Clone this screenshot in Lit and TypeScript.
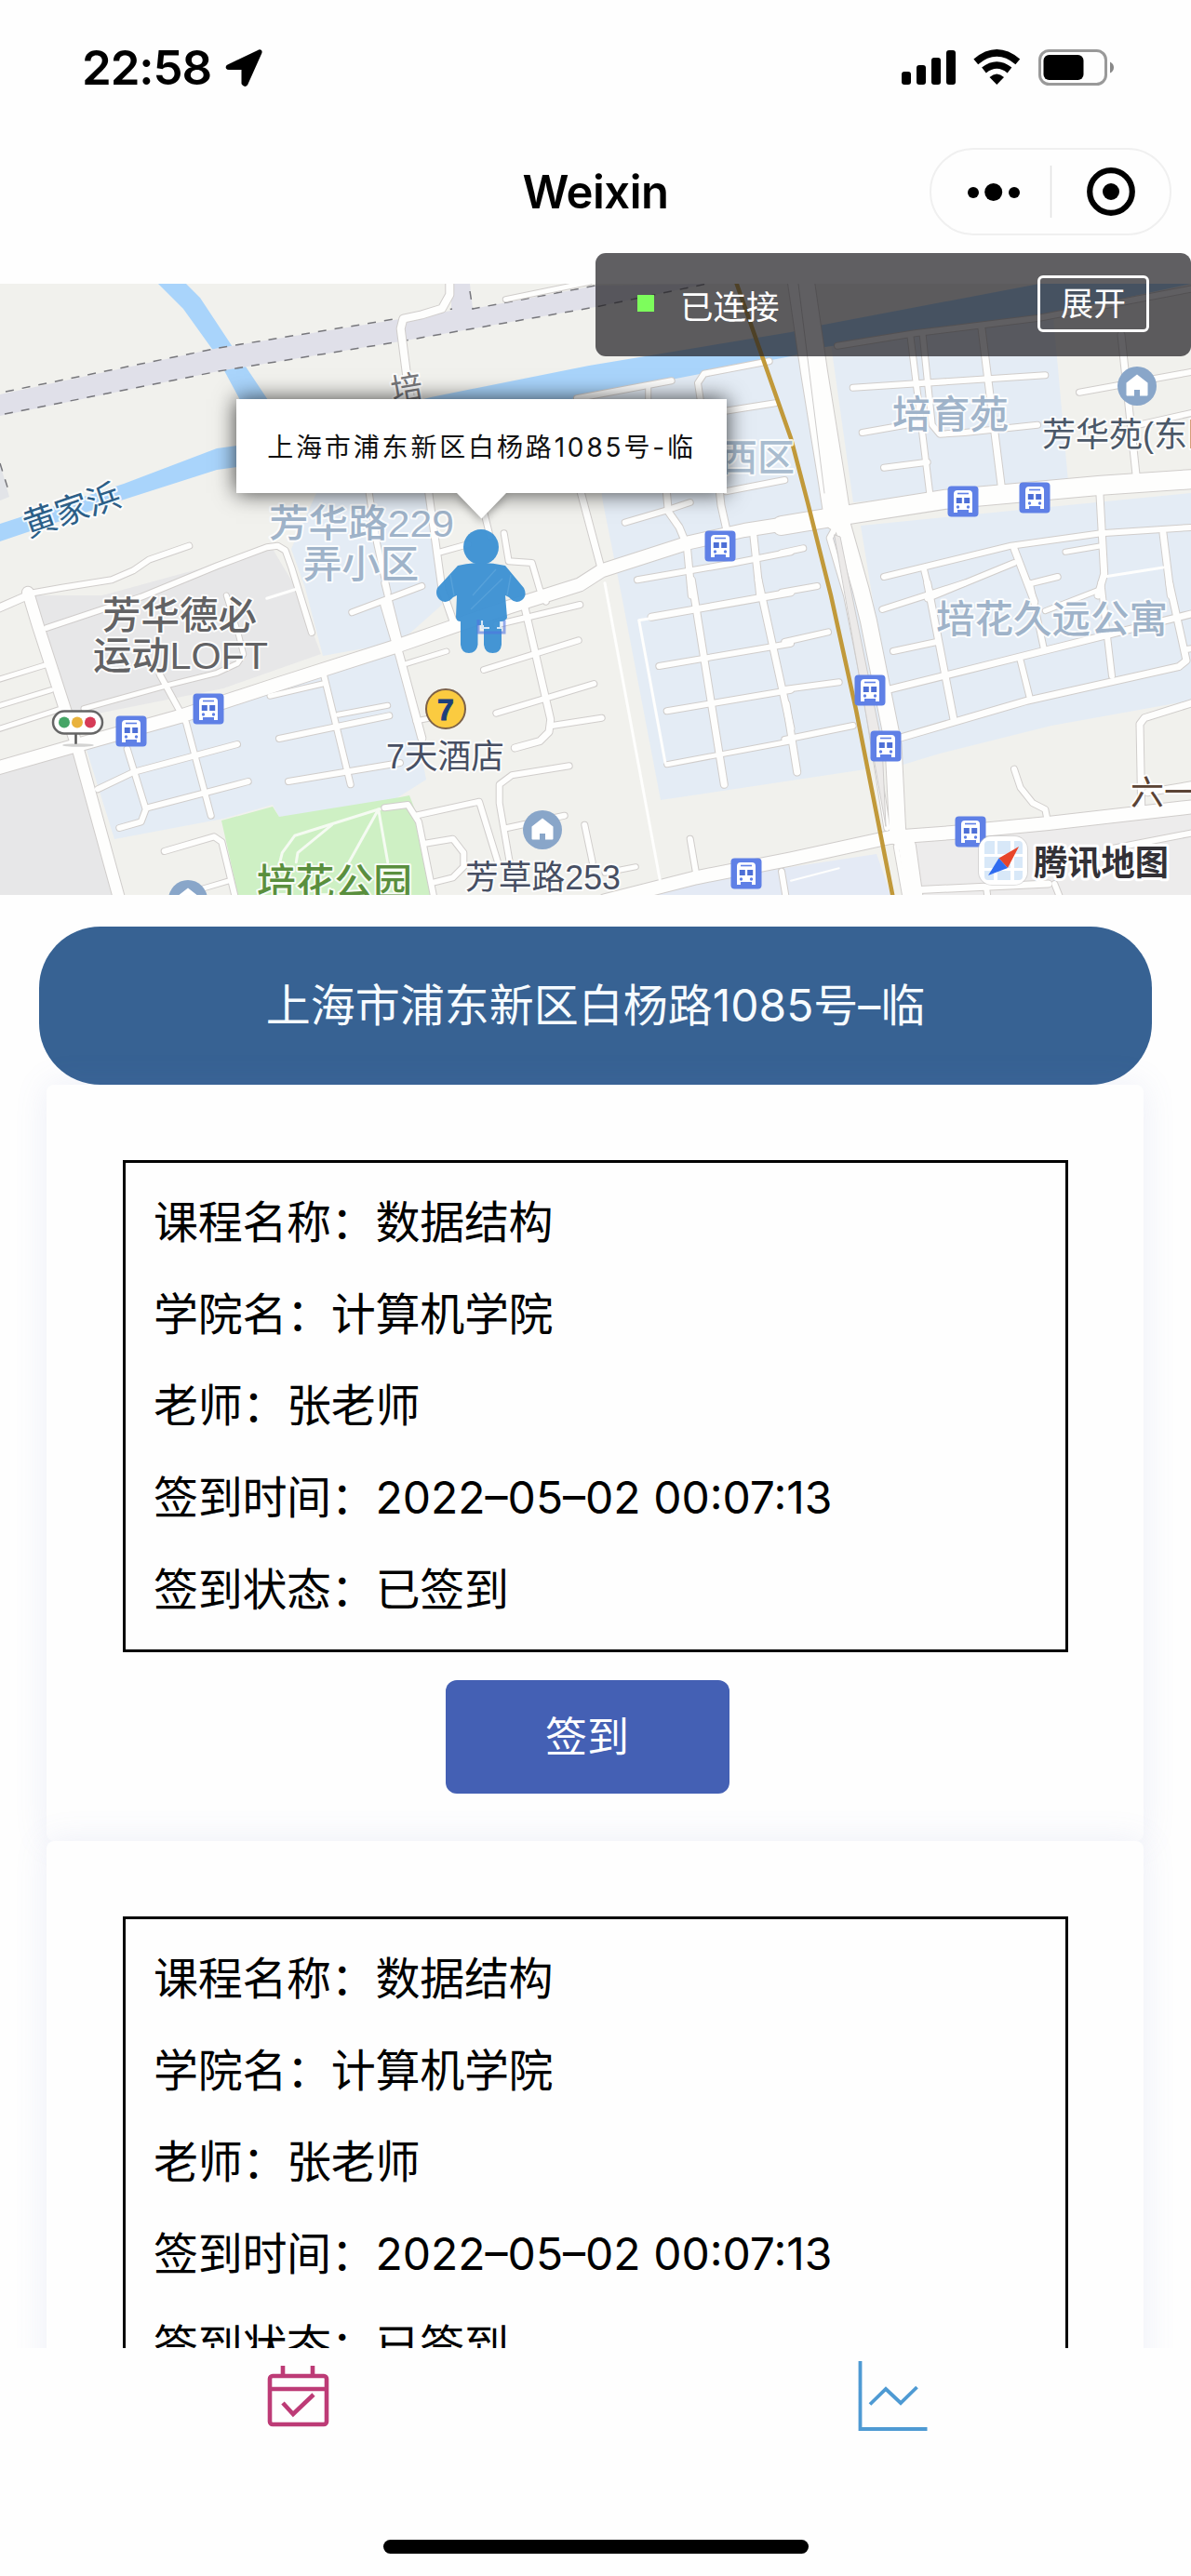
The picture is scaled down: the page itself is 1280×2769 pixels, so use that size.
import { LitElement, html, svg, css } from "lit";
import { customElement, property } from "lit/decorators.js";

type Origin = [number, number];
type Road = [number, string];

// The map is described in tiles drawn at three times the display scale.
const A: Origin = [0, 300];
const B: Origin = [0, 630];
const C: Origin = [420, 300];
const D: Origin = [420, 630];
const E: Origin = [850, 300];
const F: Origin = [850, 630];

const tile = (o: Origin, roads: Road[]) =>
  roads.map(([w, pts]) => ({
    w,
    pts: pts
      .split(" ")
      .map((p) => {
        const [x, y] = p.split(",").map(Number);
        return `${(o[0] + x / 3).toFixed(1)},${(o[1] + y / 3).toFixed(1)}`;
      })
      .join(" "),
  }));

const ROADS = [
  ...tile(A, [
    [6, "610,860 480,905 430,940 360,970 200,995 90,1015"],
    [6, "150,1125 330,1065 455,1025 700,925 860,865 895,860 920,875 940,930 1005,1140"],
    [3, "860,1030 960,998"],
    [6, "1190,690 1215,850 1250,1010"],
  ]),
  ...tile(B, [
    [12, "90,20 120,120 230,460 250,520 385,1010"],
    [8, "-20,78 90,30"],
    [14, "-20,590 240,515 580,420 900,315 1290,190 1485,122 1640,68 1870,-5 1940,-50 2220,-140 2400,-180 2560,-205"],
    [5, "-10,303 145,255"],
    [5, "-10,388 165,335"],
    [5, "-10,463 200,395"],
    [5, "270,395 540,320 700,280 765,250 785,220 770,160 730,30"],
    [6, "515,285 600,440 680,740"],
    [6, "315,655 430,600 765,510"],
    [6, "475,715 800,630"],
    [6, "410,525 470,720 455,760 385,780"],
    [6, "530,855 690,808 715,825 760,1010"],
    [5, "655,975 740,950"],
    [6, "1045,290 1130,640"],
    [6, "900,492 1255,418"],
    [5, "1090,415 1250,385"],
    [6, "930,630 1290,570"],
    [5, "870,355 1040,315"],
    [6, "1240,-10 1290,190"],
    [6, "1135,85 1360,0"],
  ]),
  ...tile(C, [
    [8, "190,-10 190,50 165,95 100,115 40,128 32,160 50,300 80,500"],
    [5, "370,65 640,10"],
    [7, "110,600 165,1000 200,1100"],
    [6, "160,880 250,855"],
    [6, "300,750 320,830"],
    [6, "365,820 380,910 455,915 480,1000 500,1040"],
    [7, "600,640 680,940"],
    [6, "755,785 890,745 965,720"],
    [7, "885,640 895,750 930,800 955,860 970,1020"],
    [7, "1055,640 1065,730 1085,820"],
    [6, "1080,685 1270,648"],
    [6, "795,970 1110,915 1290,880"],
    [7, "1170,830 1190,1020"],
    [6, "600,385 905,328"],
    [5, "830,345 830,395"],
    [6, "1000,400 990,335 1010,305 1220,265"],
    [6, "1060,428 1240,400"],
  ]),
  ...tile(D, [
    [8, "-20,60 30,230 100,490"],
    [5, "50,250 180,210"],
    [7, "430,60 515,430 510,470 480,500 400,522"],
    [6, "340,125 610,60"],
    [6, "300,270 605,175"],
    [6, "340,410 655,315"],
    [6, "520,450 680,425"],
    [5, "80,435 130,425"],
    [6, "575,580 390,610 350,640 350,700 385,900"],
    [6, "375,780 560,740"],
    [6, "80,740 285,695 345,890"],
    [6, "110,830 200,815 235,860 235,905 200,940 140,955"],
    [6, "-20,715 55,705 90,760 140,1010"],
    [6, "625,770 650,890"],
    [5, "690,925 790,905"],
    [3, "690,-10 870,960"],
    [7, "840,100 1290,20"],
    [3, "850,102 800,110 885,570"],
    [7, "970,-20 1075,640"],
    [7, "1185,-20 1290,460"],
    [6, "865,258 1290,185"],
    [6, "890,403 1290,335"],
    [5, "890,575 1290,500"],
    [6, "965,815 985,930"],
    [14, "690,1015 985,940 1290,880 1610,810 1810,795 2120,765 2600,710"],
    [6, "1260,920 1275,1010"],
  ]),
  ...tile(E, [
    [28, "30,-10 75,300 130,640 150,770"],
    [20, "-30,795 150,765 500,710 1000,665 1300,645"],
    [17, "160,770 225,1000 250,1100 330,1500 345,1800"],
    [6, "150,790 125,835 180,1020 240,1320 310,1770"],
    [6, "200,350 820,310"],
    [6, "385,180 450,710"],
    [6, "425,180 455,470 480,500 560,495 795,470"],
    [6, "230,495 430,460"],
    [6, "300,608 440,590"],
    [7, "615,160 680,680"],
    [7, "1065,180 1115,650"],
    [6, "930,365 1300,298"],
    [6, "1100,475 1300,430"],
    [6, "150,215 400,175 800,125 1300,30"],
    [7, "995,680 1010,950 990,1020"],
    [6, "300,960 710,860 1000,820 1300,800"],
    [6, "430,940 450,1020"],
    [6, "440,1030 720,915"],
    [7, "720,870 785,1040"],
    [6, "780,980 860,960"],
    [5, "885,880 1000,860"],
    [7, "1200,820 1225,1020"],
    [3, "1010,960 1200,930"],
    [6, "-30,883 40,868"],
    [6, "-30,1010 85,990"],
  ]),
  ...tile(F, [
    [6, "-20,180 120,148"],
    [6, "-20,333 155,310"],
    [6, "-20,495 200,450"],
    [7, "-15,380 20,600"],
    [6, "295,75 560,-10"],
    [7, "440,-10 525,430"],
    [6, "330,210 470,180"],
    [7, "310,335 810,210 1290,90"],
    [7, "350,490 760,370 1250,260 1275,240 1260,170 1220,-10"],
    [6, "740,240 770,360"],
    [6, "770,-10 815,200"],
    [6, "1000,-10 1035,290"],
    [5, "820,80 1000,10"],
    [6, "1270,205 1300,200"],
    [7, "1300,375 1140,425 1125,445 1130,710"],
    [6, "720,590 740,650 780,700 820,720 825,745"],
    [6, "1300,795 1040,845"],
    [7, "400,980 830,960"],
    [6, "630,970 635,1010"],
    [6, "850,960 870,1010"],
    [7, "1150,665 1300,640"],
    [18, "345,800 375,840 400,1020"],
    [5, "340,840 370,1010"],
    [2, "0,950 155,910"],
  ]),
];

const PARK_PATHS = tile(B, [
  [3, "900,900 910,860 950,805 1220,720 1300,705"],
  [3, "955,890 960,860 1070,770"],
  [3, "1120,900 1220,720 1250,890"],
]);

const AREAS: [string, string][] = [
  ["#e7e7e8", "35,640 110,640 293,590 318,632 345,703 240,740 80,772"],
  ["#e7e7e8", "0,828 82,808 125,963 0,963"],
  ["#edecec", "968,905 1280,872 1280,963 985,963"],
  ["#e2e4e8", "0,498 10,534 0,538"],
  ["#e4ecf5", "313,590 340,530 458,530 475,650 430,690 347,705 328,632"],
  ["#e4ecf5", "93,806 430,690 458,838 420,862 300,878 293,865 240,880 123,902"],
  ["#e4ecf5", "648,540 633,425 850,383 875,380 908,545 955,780 930,827 710,860 668,640"],
  ["#e4ecf5", "893,370 1132,340 1148,518 917,540"],
  ["#e4ecf5", "925,565 1280,530 1280,753 1130,780 1010,810 967,823"],
  ["#e4eaf5", "660,963 850,932 942,918 958,963"],
  ["#cef0c4", "238,882 293,867 300,878 430,857 440,855 447,873 467,963 256,963"],
  ["#a9d4fb", "170,305 200,305 215,320 250,373 288,430 258,430 230,378 197,332"],
  ["#a9d4fb", "0,563 133,520 233,482 255,479 463,427 633,393 850,357 880,350 1117,305 1280,305 1117,340 887,373 850,383 633,425 540,445 255,502 233,505 133,537 0,582"],
  ["#e0e0e9", "0,424 235,374 430,343 485,334 485,305 505,305 508,332 640,307 760,305 640,330 430,367 235,399 0,447"],
];

const RAILS = [
  "6,421 235,374 430,342 486,332",
  "505,313 508,332 640,307",
  "5,445 235,399 430,367 640,330 760,305",
  "0,498 10,530",
];

const BUSES: Origin[] = [
  [141, 786], [224, 762], [774, 587], [1035, 539],
  [1112, 535], [935, 742], [952, 802], [1043, 894], [802, 939],
];
const HOMES: Origin[] = [[1222, 415], [583, 892], [202, 967]];

interface Label { t: string; x: number; y: number; w: number; c: string; s: number; b?: number; r?: number }
const LABELS: Label[] = [
  { t: "黄家浜", x: 23, y: 548, w: 108, c: "#2c5f88", s: 36, r: -19 },
  { t: "培", x: 420, y: 417, w: 34, c: "#77777a", s: 34, r: -10 },
  { t: "芳华路229", x: 289, y: 562, w: 199, c: "#9fb3c9", s: 41, b: 500 },
  { t: "弄小区", x: 326, y: 606, w: 124, c: "#9fb3c9", s: 41, b: 500 },
  { t: "西区", x: 774, y: 492, w: 80, c: "#a9bccf", s: 40, b: 500 },
  { t: "芳华德必", x: 110, y: 661, w: 166, c: "#626264", s: 41, b: 500 },
  { t: "运动LOFT", x: 100, y: 704, w: 188, c: "#626264", s: 41, b: 500 },
  { t: "培育苑", x: 959, y: 445, w: 125, c: "#9fb3c9", s: 41, b: 500 },
  { t: "芳华苑(东区", x: 1120, y: 467, w: 192, c: "#4b5868", s: 36 },
  { t: "培花久远公寓", x: 1006, y: 665, w: 249, c: "#9fb3c9", s: 41, b: 500 },
  { t: "7天酒店", x: 415, y: 813, w: 127, c: "#474f63", s: 36 },
  { t: "芳草路253", x: 500, y: 943, w: 167, c: "#474f63", s: 36 },
  { t: "培花公园", x: 276, y: 948, w: 167, c: "#5a8f3e", s: 41, b: 500 },
  { t: "六一", x: 1215, y: 852, w: 72, c: "#5b4334", s: 36 },
];

@customElement("map-view")
export class MapView extends LitElement {
  static styles = css`
    :host { display: block; position: relative; height: 657px; overflow: hidden; }
    .map { display: block; width: 1280px; height: 657px; font-family: "Liberation Sans", "Noto Sans CJK SC", sans-serif; }
    .callout {
      position: absolute; left: 254px; top: 124px; width: 527px; height: 101px;
      background: #fff; box-shadow: 0 0 22px rgba(0, 0, 0, 0.75);
      display: flex; align-items: center; justify-content: center; box-sizing: border-box; padding-top: 2px;
      font: 400 28px/1 Inter, "Noto Sans CJK SC", sans-serif; letter-spacing: 2.85px; white-space: nowrap; color: #111;
    }
    .tip { position: absolute; left: 491px; top: 225px; width: 53px; height: 28px; filter: drop-shadow(0 3px 5px rgba(0, 0, 0, 0.35)); clip-path: inset(0 -15px -15px -15px); }
  `;

  private label(l: Label) {
    const cx = l.x + l.w / 2;
    return svg`<text x=${l.x} y=${l.y + l.s * 0.36} textLength=${l.w} lengthAdjust="spacingAndGlyphs"
      font-size=${l.s} font-weight=${l.b ?? 400} fill=${l.c} stroke="#fff" stroke-opacity=".85" stroke-width="4" stroke-linejoin="round"
      paint-order="stroke" transform=${`rotate(${l.r ?? 0} ${cx} ${l.y})`}>${l.t}</text>`;
  }

  private bus([x, y]: Origin) {
    return svg`<g transform=${`translate(${x - 16} ${y - 16})`}>
      <rect x="-.5" y="-.5" width="33" height="33" rx="4" fill="#5f80e6" />
      <path d="M10 4h12q4 0 4 4v20h-4v-3H10v3H6V8q0-4 4-4z" fill="#fff" />
      <path d="M10 7.5h12" stroke="#5f80e6" stroke-width="1.6" />
      <path d="M8.8 12h6v6h-6zM17.2 12h6v6h-6z" fill="#4d6fd6" />
      <circle cx="10.5" cy="22" r="1.7" fill="#5f80e6" /><circle cx="21.5" cy="22" r="1.7" fill="#5f80e6" />
    </g>`;
  }

  private home([x, y]: Origin) {
    return svg`<g transform=${`translate(${x} ${y})`}>
      <circle r="21" fill="#89a6c9" />
      <path d="M0-12.5L11.5-3.5V9.5a1 1 0 0 1-1 1H3V4H-3v6.500H-10.500a1 1 0 0 1-1-1V-3.500z" fill="#fff" />
    </g>`;
  }

  render() {
    return html`
      <svg class="map" viewBox="0 305 1280 657">
        <rect y="305" width="1280" height="657" fill="#f1f1ed" />
        ${AREAS.map(([c, p]) => svg`<polygon points=${p} fill=${c} />`)}
        ${RAILS.map((p) => svg`<polyline points=${p} fill="none" stroke="#77777c" stroke-width="1.5" stroke-dasharray="9 9" />`)}
        <g fill="none" stroke-linecap="round" stroke-linejoin="round">
          ${PARK_PATHS.map((r) => svg`<polyline points=${r.pts} stroke="#f5fbf2" stroke-width="3" />`)}
          ${ROADS.map((r) => (r.w > 3 ? svg`<polyline points=${r.pts} stroke="#d0cdcb" stroke-width=${r.w + 2} />` : ""))}
          ${ROADS.map((r) => svg`<polyline points=${r.pts} stroke="#fefefd" stroke-width=${r.w} />`)}
          <path d="M858 305L886 530" stroke="#cfcdcc" stroke-width="1" />
          <path d="M897 575L903 577L948 800L952 888Z" fill="#eceae9" stroke="#cfcdcc" stroke-width="1" />
          <polyline points="791,303 850,471 868,540 893,640 920,763 960,966" stroke="#c1993a" stroke-width="4.500" />
        </g>
        ${LABELS.map((l) => this.label(l))}
        ${BUSES.map((b) => this.bus(b))}
        ${HOMES.map((h) => this.home(h))}
        <g>
          <path d="M81.500 789v11" stroke="#555" stroke-width="2.500" />
          <ellipse cx="84" cy="801" rx="17" ry="1.800" fill="#b5b5b5" opacity=".6" />
          <rect x="57" y="764.500" width="53" height="24" rx="12" fill="#fff" stroke="#666" stroke-width="2.500" />
          <circle cx="69" cy="776.500" r="6" fill="#45a566" /><circle cx="83" cy="776.500" r="6" fill="#e9b23c" /><circle cx="97" cy="776.500" r="6" fill="#d63b57" />
        </g>
        <circle cx="479" cy="762" r="21" fill="#fbcb40" stroke="#7d6248" stroke-width="2" />
        <text x="479" y="773.500" text-anchor="middle" font-size="32" font-weight="700" fill="#1c3f7c" stroke="#1c3f7c" stroke-width="1">7</text>
        <g fill="#3e92d4" opacity=".96">
          <circle cx="517" cy="588" r="19" />
          <path d="M492 608Q517 602 543 608L563 632Q567 640 561 645Q554 650 547 642L543 640L545 664Q543 668 539 668V693Q538 702 529.500 702Q521 702 520 693V672H513.500V693Q512 702 504 702Q496 702 495 693V668Q490 668 490 663L491 640L487 642Q480 650 473 645Q467 640 470 632Z" />
          <path d="M484 618L488 640M508 640L533 612M549 618L545 640M506 655L540 622" fill="none" stroke="#61a9e0" stroke-width="1.500" opacity=".5" />
          <path d="M514 666v14h28v-13" fill="none" stroke="#4a6fe0" stroke-width="3" opacity=".6" /><path d="M518 667v8h8M534 675h4v-7" fill="none" stroke="#d5e8f8" stroke-width="2" />
        </g>
        <g transform="translate(1052 899)">
          <rect x="-1" y="-1" width="54" height="54" rx="15" fill="#bbb" opacity=".45" />
          <rect width="52" height="52" rx="14" fill="#fff" />
          <path d="M6 9q0-4 4-4h7v14H6zM20 5h14v14H20zM38 5h5q4 0 4 4v10h-9zM6 22h28v12H6zM38 22h9v12h-9zM6 37h10v10h-6q-4 0-4-4zM20 37h14v10H20zM38 37h9v6q0 4-4 4h-5z" fill="#d8e8f8" />
          <path d="M43 11L31 34L21.500 23.500Z" fill="#e8452a" />
          <path d="M10 42L21.500 23.500L31 34Z" fill="#2f6cf0" />
        </g>
        <text x="1111" y="941" textLength="145" lengthAdjust="spacingAndGlyphs" font-size="37" font-weight="700" fill="#333136" stroke="#fff" stroke-width="6" stroke-linejoin="round" paint-order="stroke">腾讯地图</text>
      </svg>
      <div class="callout">上海市浦东新区白杨路1085号-临</div>
      <svg class="tip" viewBox="0 0 53 28"><path d="M0 0H53L26.500 27.500Z" fill="#fff" /></svg>
    `;
  }
}

interface Course { name: string; college: string; teacher: string; time: string; status: string }

@customElement("course-card")
export class CourseCard extends LitElement {
  @property({ attribute: false }) course!: Course;

  static styles = css`
    :host { display: block; }
    .card {
      box-sizing: border-box; height: 813px; margin: 0 51px 0 50px; padding: 81px 81px 0 82px;
      background: #fefefe; border-radius: 8px; box-shadow: 0 0 36px rgba(110, 120, 200, 0.12);
      display: flex; flex-direction: column; align-items: stretch;
    }
    .info {
      box-sizing: border-box; height: 529px; border: 3px solid #000; padding: 15px 0 0 30px;
      display: flex; flex-direction: column; font-size: 48px; line-height: 98.7px; white-space: nowrap; letter-spacing: -0.3px;
    }
    .time { letter-spacing: 0; }
    .sign {
      align-self: center; margin: 30px 18px 0 0; width: 305px; height: 122px; border: 0; border-radius: 12px; padding: 0;
      background: #4460b4; color: #fff; font: inherit; font-size: 45px; line-height: 123px;
    }
  `;

  render() {
    const c = this.course;
    return html`
      <section class="card">
        <div class="info">
          <div>课程名称：${c.name}</div>
          <div>学院名：${c.college}</div>
          <div>老师：${c.teacher}</div>
          <div>签到时间：<span class="time">${c.time}</span></div>
          <div>签到状态：${c.status}</div>
        </div>
        <button class="sign">签到</button>
      </section>
    `;
  }
}

@customElement("app-root")
export class AppRoot extends LitElement {
  static styles = css`
    :host { display: block; }
    .screen {
      position: relative; width: 1280px; height: 2769px; overflow: hidden; background: #fefefe; color: #000;
      display: flex; flex-direction: column; font-family: Inter, "Noto Sans CJK SC", sans-serif;
    }
    .status { flex: none; height: 145px; box-sizing: border-box; padding: 43px 82px 0 88px; display: flex; align-items: flex-start; justify-content: space-between; }
    .clock { display: flex; align-items: flex-start; gap: 15px; }
    .time { font-size: 51px; line-height: 60px; font-weight: 600; letter-spacing: -1.1px; }
    .arrow { margin-top: 9px; }
    .signals { margin-top: 9px; }
    .nav { flex: none; height: 160px; display: grid; grid-template-columns: 1fr auto 1fr; padding: 14px 21px 0; box-sizing: border-box; align-items: start; }
    .title { grid-column: 2; font-size: 49px; line-height: 96px; font-weight: 600; letter-spacing: -0.5px; }
    .capsule { grid-column: 3; justify-self: end; box-sizing: border-box; width: 260px; height: 94px; border: 2px solid #f0f0f0; border-radius: 47px; }
    .capsule svg { display: block; margin: -2px; }
    .console {
      position: absolute; left: 640px; top: 272px; width: 640px; height: 111px; box-sizing: border-box; padding: 0 45px;
      border-radius: 11px; background: rgba(28, 27, 32, 0.7); color: #fff; display: flex; align-items: center; font-size: 35.5px;
    }
    .dot { width: 18px; height: 18px; margin: -3px 28px 0 0; background: #7dfd5c; }
    .expand { margin: -2px 0 0 auto; box-sizing: border-box; width: 120px; height: 61px; border: 3px solid #fff; border-radius: 6px; text-align: center; line-height: 54px; font-size: 35px; }
    .scroll { flex: none; height: 1562px; overflow: hidden; padding-top: 34px; box-sizing: border-box; }
    .address { height: 170px; margin: 0 42px 0 42px; border-radius: 66px; background: #376293; color: #f6fbff; text-align: center; font-size: 48px; line-height: 169px; white-space: nowrap; }
    .tabs { flex: none; height: 206px; display: grid; grid-template-columns: 1fr 1fr; justify-items: center; align-items: start; box-sizing: border-box; padding-top: 10px; }
    .home { flex: none; align-self: center; width: 457px; height: 15px; border-radius: 8px; background: #000; }
  `;

  private courses: Course[] = [0, 1].map(() => ({
    name: "数据结构", college: "计算机学院", teacher: "张老师", time: "2022–05–02 00:07:13", status: "已签到",
  }));

  render() {
    return html`
      <main class="screen">
        <header class="status">
          <div class="clock">
            <span class="time">22:58</span>
            <svg class="arrow" width="40" height="42" viewBox="242 52 40 42"><path d="M278.500 55.500L245 71.500Q244 73 246 73H261.500V89.500Q263 92 264.500 90L279.500 56.500Q280 55 278.500 55.500Z" stroke="#000" stroke-width="4" stroke-linejoin="round" /></svg>
          </div>
          <svg class="signals" width="230" height="42" viewBox="969 52 230 42">
            <rect x="970" y="77" width="10" height="14" rx="3" /><rect x="986" y="70" width="10" height="21" rx="3" />
            <rect x="1002" y="62" width="10" height="29" rx="3" /><rect x="1018" y="54" width="10" height="37" rx="3" />
            <path d="M1049.800 66.300Q1072.300 47.500 1094.800 66.300M1058.500 75.500Q1072.300 64.500 1086 75.500" fill="none" stroke="#000" stroke-width="7.500" />
            <path d="M1064.500 83Q1072.300 76 1080 83L1072.300 91Z" />
            <rect x="1118.500" y="54.500" width="71" height="36" rx="10" fill="none" stroke="#999" stroke-width="3" />
            <rect x="1122.500" y="59" width="43" height="27" rx="6" />
            <path d="M1194 66.500Q1198 68.500 1198 72.500Q1198 76.500 1194 78.500Z" fill="#888" />
          </svg>
        </header>
        <nav class="nav">
          <div class="title">Weixin</div>
          <div class="capsule">
            <svg width="260" height="94" viewBox="999 159 260 94">
              <circle cx="1046" cy="207" r="6" /><circle cx="1067.700" cy="206.500" r="9.500" /><circle cx="1090" cy="207" r="6" />
              <path d="M1129.500 178v56" stroke="#e2e2e2" stroke-width="1.500" />
              <circle cx="1194" cy="206" r="22.800" fill="none" stroke="#000" stroke-width="6.200" /><circle cx="1194" cy="206" r="9" />
            </svg>
          </div>
        </nav>
        <map-view></map-view>
        <aside class="console"><span class="dot"></span><span>已连接</span><span class="expand">展开</span></aside>
        <section class="scroll">
          <div class="address">上海市浦东新区白杨路1085号–临</div>
          <div class="list">${this.courses.map((c) => html`<course-card .course=${c}></course-card>`)}</div>
        </section>
        <footer class="tabs">
          <svg width="70" height="80" viewBox="285 2534 70 80" fill="none" stroke="#bd3b76" stroke-width="4.600">
            <rect x="290" y="2554" width="61" height="52" rx="3" /><path d="M290 2568H351M304 2543V2554M336 2543V2554M304 2583L315 2595L337 2574" />
          </svg>
          <svg width="76" height="80" viewBox="922 2534 76 80" fill="none" stroke="#4e9ad3" stroke-width="3.800">
            <path d="M924.500 2538V2611H996.500M935 2584.500L952 2568L968 2583L985.500 2566" />
          </svg>
        </footer>
        <div class="home"></div>
      </main>
    `;
  }
}
